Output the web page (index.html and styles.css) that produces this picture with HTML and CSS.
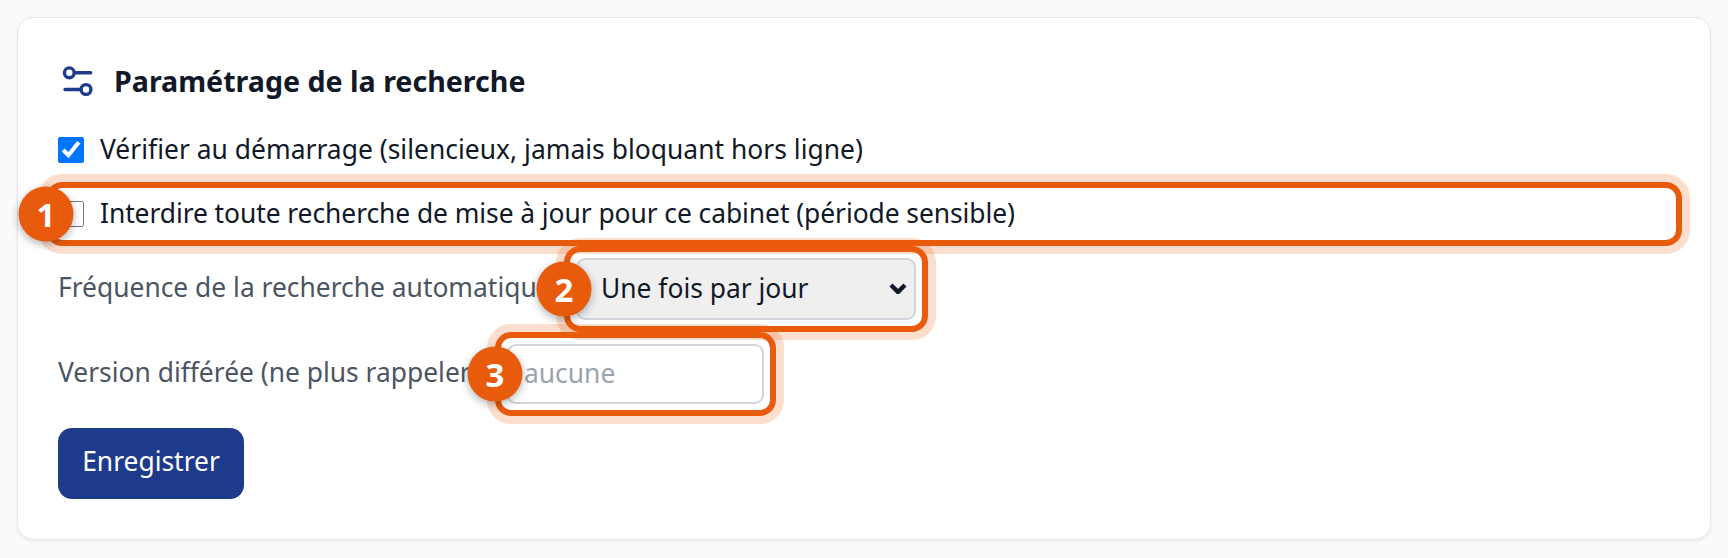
FILE: index.html
```html
<!DOCTYPE html>
<html lang="fr">
<head>
<meta charset="utf-8">
<title>Paramétrage de la recherche</title>
<link rel="stylesheet" href="styles.css">
</head>
<body>
<section class="card">
  <h2 class="title">
    <svg class="title-icon" viewBox="0 0 40 40" aria-hidden="true">
      <circle cx="11.3" cy="11.8" r="4.9"/>
      <path d="M17 11.8H32.7"/>
      <path d="M7 28.5H22"/>
      <circle cx="28" cy="28.5" r="4.9"/>
    </svg>
    <span class="title-text">Paramétrage de la recherche</span>
  </h2>
  <label class="check-row">
    <input type="checkbox" class="check" checked>
    <span class="check-text">Vérifier au démarrage (silencieux, jamais bloquant hors ligne)</span>
  </label>
  <label class="check-row marked">
    <input type="checkbox" class="check">
    <span class="check-text check-text-tight">Interdire toute recherche de mise à jour pour ce cabinet (période sensible)</span>
    <span class="mark"></span>
    <span class="badge">1</span>
  </label>
  <div class="field">
    <label class="field-label freq-label">Fréquence de la recherche automatique</label>
    <div class="marked select-wrap">
      <select class="select">
        <option>Une fois par jour</option>
      </select>
      <svg class="chevron" viewBox="0 0 18 11" aria-hidden="true"><path d="M2 2L9 9L16 2"/></svg>
      <span class="mark"></span>
      <span class="badge">2</span>
    </div>
  </div>
  <div class="field">
    <label class="field-label version-label">Version différée (ne plus rappeler)</label>
    <div class="marked input-wrap">
      <input class="input" type="text" placeholder="aucune">
      <span class="mark"></span>
      <span class="badge">3</span>
    </div>
  </div>
  <button class="save" type="button">Enregistrer</button>
</section>
</body>
</html>
```
FILE: styles.css
```css
* { box-sizing: border-box; }
html, body { margin: 0; height: 100%; }
body {
  background: #f8fafc;
  padding: 17px 17px 18px;
  font-family: "Noto Sans", "Lato", sans-serif;
  color: #111827;
}
.card {
  background: #fff;
  border: 1px solid #e5e7eb;
  border-radius: 16px;
  box-shadow: 0 1px 3px rgba(0,0,0,.08);
  padding: 40px;
  height: 523px;
  display: flex;
  flex-direction: column;
  align-items: flex-start;
}
.title {
  display: flex;
  align-items: center;
  gap: 16px;
  margin: 1px 0 27px;
  height: 44px;
  font-size: 28.6px;
  font-weight: 700;
  color: #111827;
}
.title-text { padding-bottom: 2px; }
.title-icon { flex: none; width: 40px; height: 40px; fill: none; stroke: #1e3a8a; stroke-width: 3.4; stroke-linecap: round; }
.check-row {
  position: relative;
  display: flex;
  align-items: center;
  gap: 16px;
  height: 40px;
  width: 100%;
  margin-bottom: 24px;
  font-size: 26.4px;
}
.check-text { padding-bottom: 3px; letter-spacing: .03px; }
.check-text-tight { letter-spacing: -.06px; }
.check { width: 26px; height: 26px; margin: 0; flex: none; accent-color: #0075ff; }
.field { display: flex; align-items: center; gap: 16px; margin-bottom: 24px; color: #4b5563; font-size: 26.4px; }
.field-label { white-space: nowrap; padding-bottom: 5px; }
.freq-label { width: 502px; }
.version-label { width: 433px; }
.marked { position: relative; }
.select-wrap { width: 340px; height: 62px; }
.input-wrap { width: 257px; height: 60px; }
.select {
  appearance: none;
  display: block;
  width: 100%;
  height: 100%;
  background: #efefef;
  border: 2px solid #d1d5db;
  border-radius: 9px;
  padding: 0 23px 3px;
  font: inherit;
  color: #111827;
}
.chevron {
  position: absolute;
  right: 9px;
  top: 25px;
  width: 18px;
  height: 11px;
  fill: none;
  stroke: #111827;
  stroke-width: 4.4;
  pointer-events: none;
}
.input {
  display: block;
  width: 100%;
  height: 100%;
  background: #fff;
  border: 2px solid #d1d5db;
  border-radius: 9px;
  padding: 0 15px 3px;
  font: inherit;
  color: #111827;
}
.input::placeholder { color: #9ca3af; opacity: 1; }
.mark {
  position: absolute;
  inset: -12px;
  border: 6px solid #e95b0c;
  border-radius: 16px;
  box-shadow: 0 0 0 8px rgba(234,88,12,.2);
  pointer-events: none;
}
.badge {
  position: absolute;
  left: -12px;
  top: 50%;
  width: 55px;
  height: 55px;
  transform: translate(-50%, -50%);
  border-radius: 50%;
  background: #e95b0c;
  color: #fff;
  font-family: "Open Sans", sans-serif;
  font-weight: 700;
  font-size: 33px;
  display: flex;
  align-items: center;
  justify-content: center;
  box-shadow: 0 3px 8px rgba(0,0,0,.3);
}
.save {
  width: 186px;
  height: 71px;
  background: #1e3a8a;
  color: #fff;
  border: 0;
  border-radius: 14px;
  padding: 0 0 5px;
  font: inherit;
  font-size: 26.4px;
}
```
